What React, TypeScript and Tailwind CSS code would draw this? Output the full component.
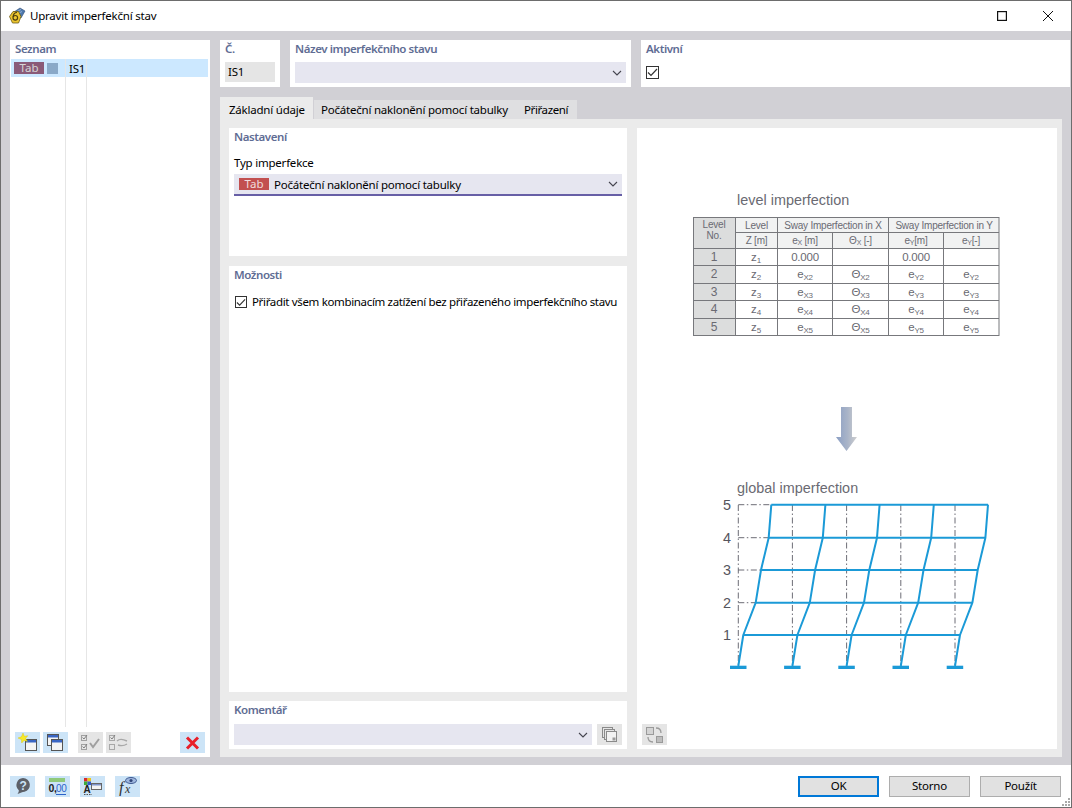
import React from "react";

const BLUE = "#1b9ad7";
const GREY = "#6a6a72";

function Chevron() {
  return (
    <svg width="10" height="6" viewBox="0 0 10 6" className="shrink-0">
      <path d="M1 1l4 4 4-4" fill="none" stroke="#45454f" strokeWidth="1.1" />
    </svg>
  );
}

function Check({ className }: { className: string }) {
  return (
    <span className={`flex items-center justify-center border border-[#333] bg-white ${className}`}>
      <svg width="11" height="9" viewBox="0 0 11 9">
        <path d="M1 4.5l3 3 6-6.5" fill="none" stroke="#333" strokeWidth="1.2" />
      </svg>
    </span>
  );
}

function GroupLabel({ children }: { children: React.ReactNode }) {
  return <div className="h-[18px] pl-[5px] text-[11.5px] leading-[18px] font-semibold tracking-[-0.42px] text-[#5f6d94]">{children}</div>;
}

function IconBtn({ children, off, className = "" }: { children: React.ReactNode; off?: boolean; className?: string }) {
  return (
    <span className={`flex h-[21px] w-[25px] shrink-0 items-center justify-center ${off ? "bg-[#e5e5e5]" : "bg-[#cce4f7]"} ${className}`}>
      {children}
    </span>
  );
}

function WindowGlyph({ x, y, w = 11, h = 11, stroke = "#555" }: { x: number; y: number; w?: number; h?: number; stroke?: string }) {
  return (
    <g>
      <rect x={x + 0.5} y={y + 0.5} width={w} height={h} fill="#f4f4f4" stroke={stroke} />
      <rect x={x + 1} y={y + 1} width={w - 1} height="2.5" fill="#3a66c4" />
    </g>
  );
}

function NewIcon() {
  return (
    <svg width="21" height="19" viewBox="0 0 21 19">
      <WindowGlyph x={8} y={6} />
      <path d="M6 0l1.300 3.300 3.500-.6-2.300 2.700 2 3-3.400-1L4.700 10l-.3-3.500L1 5l3.400-1.200z" fill="#f7e82a" stroke="#d8c400" strokeWidth=".4" />
    </svg>
  );
}

function CopyIcon() {
  return (
    <svg width="21" height="19" viewBox="0 0 21 19">
      <WindowGlyph x={2} y={1} />
      <WindowGlyph x={6} y={6} />
    </svg>
  );
}

function CheckAllIcon() {
  return (
    <svg width="21" height="19" viewBox="0 0 21 19" fill="none" stroke="#a0a0a0">
      <rect x="1.500" y="2.500" width="5" height="5" />
      <rect x="1.500" y="11.500" width="5" height="5" />
      <path d="M2.500 4.500l1.500 1.500 3-4M2.500 13.500l1.500 1.500 3-4" stroke="#808080" />
      <path d="M10 10l3 4 6-8" strokeWidth="2" />
    </svg>
  );
}

function CheckSwapIcon() {
  return (
    <svg width="21" height="19" viewBox="0 0 21 19" fill="none" stroke="#a8a8a8">
      <rect x="1.500" y="2.500" width="5" height="5" />
      <rect x="1.500" y="11.500" width="5" height="5" />
      <path d="M2.500 4.500l1.500 1.500 3-4" stroke="#808080" />
      <path d="M9 8c3-3 6-2 10 0M19 11c-3 2-6 2-9 1" strokeWidth="1.400" />
    </svg>
  );
}

function HelpIcon() {
  return (
    <svg width="19" height="18" viewBox="0 0 19 18">
      <path d="M10 1a7 7 0 0 1 1.500 13.800c-2 .2-4 1-7 2.200 1-1.400 1.400-2.500 1.300-3.800A7 7 0 0 1 10 1z" fill="#5c6068" />
      <text x="10" y="12.500" textAnchor="middle" fontSize="12" fontWeight="700" fill="#cce4f7" fontFamily="Liberation Sans, sans-serif">?</text>
    </svg>
  );
}

function DecimalIcon() {
  return (
    <svg width="21" height="19" viewBox="0 0 21 19">
      <rect x="2" y="1" width="16" height="4" fill="#8fc97a" />
      <text x="1.500" y="15" fontSize="10.500" fontWeight="700" fill="#222" fontFamily="Liberation Sans, sans-serif">0,</text>
      <text x="9" y="15" fontSize="10" fill="#2b62c9" fontFamily="Liberation Sans, sans-serif">00</text>
      <path d="M9 17.500h10" stroke="#2b62c9" />
    </svg>
  );
}

function StyleIcon() {
  return (
    <svg width="23" height="19" viewBox="0 0 23 19">
      <rect x="3" y="1" width="3.500" height="3.500" fill="#d92b2b" />
      <rect x="6.500" y="1" width="3.500" height="3.500" fill="#e9c61f" />
      <rect x="3" y="4.500" width="3.500" height="3.500" fill="#3cab3a" />
      <rect x="6.500" y="4.500" width="3.500" height="3.500" fill="#3158c9" />
      <text x="2.500" y="15.500" fontSize="10" fontWeight="700" fill="#222" fontFamily="Liberation Sans, sans-serif">A</text>
      <path d="M3 17.500h8" stroke="#555" strokeDasharray="1.500 1" />
      <rect x="10.500" y="6.500" width="10" height="6" fill="#f3f3f3" stroke="#666" />
      <rect x="11" y="7" width="9" height="1.500" fill="#7d93c9" />
    </svg>
  );
}

function FxIcon() {
  return (
    <svg width="23" height="20" viewBox="0 0 23 20">
      <text x="3" y="17" fontSize="16" fontStyle="italic" fill="#333" fontFamily="Liberation Serif, serif">f</text>
      <text x="9" y="17" fontSize="12" fontStyle="italic" fill="#333" fontFamily="Liberation Serif, serif">x</text>
      <ellipse cx="15" cy="4.500" rx="5.500" ry="3" fill="#9fb7de" stroke="#3f5a92" />
      <circle cx="15" cy="4.500" r="1.600" fill="#2f4578" />
    </svg>
  );
}

function AppLogo() {
  return (
    <svg width="18" height="18" viewBox="0 0 18 18">
      <path d="M6 5l6-4 5 3-4 7z" fill="#4d78ad" stroke="#2e4a73" strokeWidth=".6" />
      <path d="M8 5l5-2.500M9 7l5-2.500" stroke="#b5c9e2" strokeWidth=".7" />
      <path d="M5 4.500h5.500L13 9.500l-2.500 6.500H4.500L1.500 9.500z" fill="#ecc52f" stroke="#6b5a17" strokeWidth=".8" />
      <circle cx="7.300" cy="10.800" r="2.300" fill="none" stroke="#4c3f10" strokeWidth="1.200" />
      <path d="M9 5.500C6.500 5.500 5.300 7.500 5.100 10" fill="none" stroke="#4c3f10" strokeWidth="1.200" />
    </svg>
  );
}

function TableRow({ y, h, n, lvl, a, b, c, d }: { y: number; h: number; n: string; lvl: string; a: string; b: string; c: string; d: string }) {
  const base = y + h / 2 + 4;
  const sub = (x: number, s: string) => {
    if (!s) return null;
    const first = s[0] === "T" ? "Θ" : s[0];
    return (
      <text x={x} y={base} textAnchor="middle" fontSize="11.500" fill={GREY}>
        {first}
        <tspan fontSize="8" dy="2">{s.slice(1)}</tspan>
      </text>
    );
  };
  return (
    <g>
      <text x="714" y={base} textAnchor="middle" fontSize="12" fill={GREY}>{n}</text>
      {sub(756, lvl)}
      {sub(805, a)}
      {sub(860.500, b)}
      {sub(916, c)}
      {sub(971, d)}
    </g>
  );
}

function Diagram() {
  const hx = [738.3, 792.4, 846.6, 900.8, 955];
  const levels = [
    { y: 635, off: 5, label: "1", ty: 640 },
    { y: 602.7, off: 17.4, label: "2", ty: 607.5 },
    { y: 570, off: 22.7, label: "3", ty: 575 },
    { y: 537.7, off: 30.4, label: "4", ty: 542.5 },
    { y: 504.7, off: 33, label: "5", ty: 510 },
  ];
  const rowY = [248.3, 265.7, 283.3, 300.7, 318.3, 335.7];
  return (
    <svg width="420" height="596" viewBox="637 128 420 596" fontFamily="Liberation Sans, sans-serif" className="block">
      <defs>
        <linearGradient id="arrow" x1="0" x2="1" y1="0" y2="0">
          <stop offset="0" stopColor="#8b9fc4" />
          <stop offset="0.55" stopColor="#a9b4c8" />
          <stop offset="1" stopColor="#cfcfcf" />
        </linearGradient>
      </defs>

      <text x="737" y="205" fontSize="14.400" letterSpacing="0.02" fill={GREY}>level imperfection</text>

      <rect x="693.500" y="217.500" width="42" height="118" fill="#dcdddd" />
      <rect x="735.500" y="217.500" width="263.500" height="31" fill="#f1f2f2" />
      <g stroke="#77787c" strokeWidth="1" fill="none">
        <rect x="693.500" y="217.500" width="305.500" height="118" />
        <path d="M735.500 217.500v118M777.500 217.500v118M832.500 232.500v103M888.500 217.500v118M943.500 232.500v103" />
        <path d="M735.500 232.500H999M693.500 248.500H999M693.500 265.500H999M693.500 283.500H999M693.500 300.500H999M693.500 318.500H999" />
      </g>
      <g fontSize="10" fill={GREY} textAnchor="middle">
        <text x="714" y="228">Level</text>
        <text x="714" y="239">No.</text>
        <text x="756.500" y="228.500">Level</text>
        <text x="756.500" y="244">Z [m]</text>
        <text x="833" y="228.500">Sway Imperfection in X</text>
        <text x="944" y="228.500">Sway Imperfection in Y</text>
        <text x="805" y="244">e<tspan fontSize="7" dy="1">X</tspan><tspan dy="-1"> [m]</tspan></text>
        <text x="860.500" y="244">Θ<tspan fontSize="7" dy="1">X</tspan><tspan dy="-1"> [-]</tspan></text>
        <text x="916" y="244">e<tspan fontSize="7" dy="1">Y</tspan><tspan dy="-1">[m]</tspan></text>
        <text x="971" y="244">e<tspan fontSize="7" dy="1">Y</tspan><tspan dy="-1">[-]</tspan></text>
      </g>
      <text x="805" y="261" textAnchor="middle" fontSize="11.500" fill={GREY}>0.000</text>
      <text x="916" y="261" textAnchor="middle" fontSize="11.500" fill={GREY}>0.000</text>
      <TableRow y={rowY[0]} h={17} n="1" lvl="z1" a="" b="" c="" d="" />
      {[2, 3, 4, 5].map((n, i) => (
        <TableRow
          key={n}
          y={rowY[i + 1]}
          h={17}
          n={String(n)}
          lvl={`z${n}`}
          a={`eX${n}`}
          b={`TX${n}`}
          c={`eY${n}`}
          d={`eY${n}`}
        />
      ))}

      <path d="M841 407h11v30h5l-10.500 14-10.500-14h5z" fill="url(#arrow)" />

      <text x="737" y="493" fontSize="14.400" letterSpacing="0.02" fill={GREY}>global imperfection</text>

      <g stroke="#5c5c66" strokeWidth="0.9" strokeDasharray="6 2.500 1.500 2.500" fill="none">
        {hx.map((x) => (
          <path key={x} d={`M${x} 505V666`} />
        ))}
        {levels.slice(1).map((l) => (
          <path key={l.y} d={`M738.300 ${l.y}H${738.3 + l.off}`} />
        ))}
      </g>
      {levels.map((l) => (
        <text key={l.label} x="723" y={l.ty} fontSize="14.400" fill="#55555d">{l.label}</text>
      ))}

      <g stroke={BLUE} strokeWidth="2" fill="none" strokeLinejoin="round">
        {hx.map((x) => (
          <path key={x} d={`M${x} 666 ${levels.map((l) => `L${x + l.off} ${l.y}`).join(" ")}`} />
        ))}
        {levels.map((l) => (
          <path key={l.y} d={`M${hx[0] + l.off} ${l.y}H${hx[4] + l.off}`} />
        ))}
      </g>
      {hx.map((x) => (
        <rect key={x} x={x - 8.300} y="665.700" width="16.500" height="3.300" fill={BLUE} />
      ))}
    </svg>
  );
}

export default function App() {
  return (
    <div className="flex h-[808px] w-[1072px] flex-col overflow-hidden border border-[#6d6d6d] bg-white font-['Noto_Sans','Open_Sans',sans-serif] text-[11.5px] tracking-[-0.22px] text-black">
      {/* title bar */}
      <div className="flex h-[30px] shrink-0 items-center pl-[7px]">
        <AppLogo />
        <span className="ml-[4px]">Upravit imperfekční stav</span>
        <div className="ml-auto -mt-px flex items-center">
          <svg width="10" height="10" viewBox="0 0 10 10" className="mr-[36px]">
            <rect x=".6" y=".6" width="8.800" height="8.800" fill="none" stroke="#111" strokeWidth="1.200" />
          </svg>
          <svg width="10" height="10" viewBox="0 0 10 10" className="mr-[18px]">
            <path d="M0 0l10 10M10 0L0 10" stroke="#111" strokeWidth="1" />
          </svg>
        </div>
      </div>

      {/* main */}
      <div className="flex min-h-0 flex-1 gap-[10px] bg-[#d1d0d5] pt-[9px] pr-[1px] pb-[8px] pl-[9px]">
        {/* list */}
        <div className="flex w-[200px] shrink-0 flex-col bg-white">
          <GroupLabel>Seznam</GroupLabel>
          <div className="relative mt-[1px] flex-1 px-[1px]">
            <div className="flex h-[18px] w-[197px] items-center bg-[#cce8ff]">
              <span className="ml-[3px] flex h-[12px] w-[30px] items-center justify-center bg-[#8a5a78] text-[11.500px] leading-none tracking-normal text-[#d6d6d6]">Tab</span>
              <span className="ml-[3px] h-[11px] w-[11px] bg-[#8aa9c8]" />
              <span className="ml-[11px] pt-px">IS1</span>
            </div>
            <div className="absolute top-0 bottom-[5px] left-[55px] w-px bg-[#e6e6e6]" />
            <div className="absolute top-0 bottom-[5px] left-[76px] w-px bg-[#e6e6e6]" />
          </div>
          <div className="mb-[4px] flex h-[21px] items-center pl-[5px]">
            <IconBtn><NewIcon /></IconBtn>
            <IconBtn className="ml-[3px]"><CopyIcon /></IconBtn>
            <IconBtn off className="ml-[10px]"><CheckAllIcon /></IconBtn>
            <IconBtn off className="ml-[3px]"><CheckSwapIcon /></IconBtn>
            <IconBtn className="ml-[49px]">
              <svg width="15" height="14" viewBox="0 0 15 14">
                <path d="M2 1.500l11 11M13 1.500l-11 11" stroke="#e8202a" strokeWidth="3" />
              </svg>
            </IconBtn>
          </div>
        </div>

        {/* right */}
        <div className="flex min-w-0 flex-1 flex-col">
          <div className="flex h-[47px] shrink-0 gap-[10px]">
            <div className="w-[60px] bg-white">
              <GroupLabel>Č.</GroupLabel>
              <div className="mx-[5px] mt-[4px] flex h-[20px] items-center bg-[#e5e5e5] pl-[3px]">IS1</div>
            </div>
            <div className="w-[341px] bg-white">
              <GroupLabel>Název imperfekčního stavu</GroupLabel>
              <div className="mx-[5px] mt-[4px] flex h-[21px] items-center justify-end bg-[#e6e6f0] pr-[4px]"><Chevron /></div>
            </div>
            <div className="flex-1 bg-white">
              <GroupLabel>Aktivní</GroupLabel>
              <Check className="mt-[8px] ml-[5px] h-[13px] w-[13px]" />
            </div>
          </div>

          <div className="mt-[10px] flex h-[22px] shrink-0 items-end">
            <div className="flex h-[22px] w-[93px] items-center bg-[#ebebeb] pt-[3px] pl-[9px] whitespace-nowrap">Základní údaje</div>
            <div className="ml-px flex h-[19px] w-[202px] items-center bg-[#dfdfe1] pl-[7px] whitespace-nowrap">Počáteční naklonění pomocí tabulky</div>
            <div className="flex h-[19px] w-[61px] items-center bg-[#dfdfe1] pl-[8px] tracking-[-0.4px] whitespace-nowrap">Přiřazení</div>
          </div>

          <div className="grid min-h-0 w-[842px] flex-1 grid-cols-[398px_420px] gap-[10px] bg-[#ebebeb] pt-[9px] pr-[5px] pb-[8px] pl-[9px]">
            <div className="flex min-h-0 flex-col">
              <div className="h-[128px] shrink-0 bg-white">
                <GroupLabel>Nastavení</GroupLabel>
                <div className="mt-[9px] h-[16px] pl-[5px] leading-[16px]">Typ imperfekce</div>
                <div className="mx-[5px] mt-[3px] flex h-[22px] items-center border-b-2 border-[#675fa6] bg-[#e6e6f0] pr-[4px] pl-[5px]">
                  <span className="flex h-[12px] w-[30px] items-center justify-center bg-[#c25050] text-[11.500px] leading-none tracking-normal text-[#f0dcdc]">Tab</span>
                  <span className="ml-[5px] flex-1 pt-px">Počáteční naklonění pomocí tabulky</span>
                  <Chevron />
                </div>
              </div>
              <div className="mt-[10px] flex-1 bg-white">
                <GroupLabel>Možnosti</GroupLabel>
                <div className="mt-[11px] flex items-center pl-[6px]">
                  <Check className="h-[12px] w-[12px]" />
                  <span className="ml-[5px] leading-[14px] tracking-[-0.34px] whitespace-nowrap">Přiřadit všem kombinacím zatížení bez přiřazeného imperfekčního stavu</span>
                </div>
              </div>
              <div className="mt-[9px] h-[48px] shrink-0 bg-white">
                <GroupLabel>Komentář</GroupLabel>
                <div className="mx-[5px] mt-[5px] flex gap-[5px]">
                  <div className="flex h-[21px] flex-1 items-center justify-end bg-[#e6e6f0] pr-[4px]"><Chevron /></div>
                  <IconBtn off>
                    <svg width="17" height="17" viewBox="0 0 17 17" fill="#e5e5e5" stroke="#8a8a8a">
                      <rect x="1.500" y="1.500" width="10" height="10" />
                      <rect x="3.500" y="3.500" width="10" height="10" />
                      <rect x="5.500" y="5.500" width="10" height="10" fill="#f2f2f2" />
                      <rect x="11.500" y="11.500" width="3" height="3" fill="#9a9a9a" stroke="none" />
                    </svg>
                  </IconBtn>
                </div>
              </div>
            </div>

            <div className="flex min-h-0 flex-col bg-white">
              <Diagram />
              <div className="pl-[5px]">
                <IconBtn off>
                  <svg width="19" height="18" viewBox="0 0 19 18" fill="none">
                    <rect x="1.500" y="1.500" width="7" height="7" fill="#d4d4d4" stroke="#9a9a9a" />
                    <rect x="11.500" y="10.500" width="6" height="6" fill="#bdbdbd" stroke="#9a9a9a" />
                    <path d="M11 2c3 0 5 2 5 5M8 16c-3 0-5-2-5-5" stroke="#9a9a9a" strokeWidth="1.300" />
                  </svg>
                </IconBtn>
              </div>
            </div>
          </div>
        </div>
      </div>

      {/* footer */}
      <div className="relative flex h-[42px] shrink-0 items-center pr-[10px] pl-[9px]">
        <IconBtn><HelpIcon /></IconBtn>
        <IconBtn className="ml-[10px]"><DecimalIcon /></IconBtn>
        <IconBtn className="ml-[10px]"><StyleIcon /></IconBtn>
        <IconBtn className="ml-[10px]"><FxIcon /></IconBtn>
        <div className="ml-auto flex gap-[10px]">
          <button className="h-[21px] w-[81px] border-2 border-[#0078d7] bg-[#e1e1e1] leading-none">OK</button>
          <button className="h-[21px] w-[81px] border border-[#adadad] bg-[#e1e1e1] leading-none">Storno</button>
          <button className="h-[21px] w-[81px] border border-[#adadad] bg-[#e1e1e1] leading-none">Použít</button>
        </div>
        <svg width="9" height="9" viewBox="0 0 9 9" className="absolute right-0 bottom-0" fill="#a8a8a8">
          <rect x="6" y="0" width="2" height="2" />
          <rect x="3" y="3" width="2" height="2" />
          <rect x="6" y="3" width="2" height="2" />
          <rect x="0" y="6" width="2" height="2" />
          <rect x="3" y="6" width="2" height="2" />
          <rect x="6" y="6" width="2" height="2" />
        </svg>
      </div>
    </div>
  );
}
